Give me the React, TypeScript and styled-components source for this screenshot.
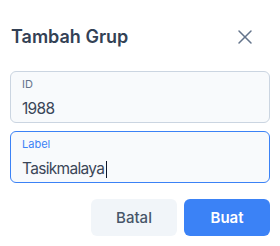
import styled, { createGlobalStyle } from "styled-components";
import { X } from "lucide-react";

const GlobalStyle = createGlobalStyle`
  html, body {
    margin: 0;
    padding: 0;
    background: #ffffff;
  }
  body {
    font-family: Inter, "Noto Sans", sans-serif;
    -webkit-font-smoothing: antialiased;
  }
`;

const Dialog = styled.div`
  width: 280px;
  height: 246px;
  box-sizing: border-box;
  padding: 25px 10px 11px;
  display: flex;
  flex-direction: column;
  background: #ffffff;
`;

const Header = styled.div`
  display: flex;
  align-items: center;
  justify-content: space-between;
  height: 24px;
  margin-bottom: 22px;
`;

const Title = styled.h2`
  margin: 0 0 0 1px;
  font-size: 18px;
  line-height: 24px;
  font-weight: 600;
  color: #334155;
`;

const CloseButton = styled.button`
  display: flex;
  align-items: center;
  justify-content: center;
  width: 24px;
  height: 24px;
  padding: 0;
  margin-right: 13px;
  border: none;
  background: transparent;
  color: #64748b;
  cursor: pointer;
`;

const Fields = styled.div`
  display: flex;
  flex-direction: column;
  gap: 8px;
`;

const Field = styled.label<{ $focused?: boolean }>`
  display: flex;
  flex-direction: column;
  padding: 5px 11px 3px;
  border: 1px solid ${(p) => (p.$focused ? "#3b82f6" : "#cbd5e1")};
  border-radius: 6px;
  background: #f8fafc;
`;

const FieldLabel = styled.span<{ $focused?: boolean }>`
  font-size: 11px;
  line-height: 14px;
  color: ${(p) => (p.$focused ? "#3b82f6" : "#64748b")};
`;

const FieldValue = styled.span`
  display: flex;
  align-items: center;
  margin-top: 8px;
  font-size: 15.5px;
  line-height: 20px;
  letter-spacing: -0.7px;
  color: #3b4658;
`;

const Caret = styled.span`
  display: inline-block;
  width: 1px;
  height: 17px;
  margin-left: 2px;
  background: #0f172a;
`;

const Actions = styled.div`
  display: flex;
  justify-content: flex-end;
  gap: 7px;
  margin-top: 16px;
`;

const Button = styled.button<{ $primary?: boolean }>`
  width: 86px;
  height: 37px;
  border: none;
  border-radius: 6px;
  font-family: Inter, "Noto Sans", sans-serif;
  font-size: 15px;
  font-weight: ${(p) => (p.$primary ? 600 : 500)};
  background: ${(p) => (p.$primary ? "#3b82f6" : "#f1f5f9")};
  color: ${(p) => (p.$primary ? "#ffffff" : "#475569")};
  cursor: pointer;
`;

export default function App() {
  return (
    <>
      <GlobalStyle />
      <Dialog>
        <Header>
          <Title>Tambah Grup</Title>
          <CloseButton aria-label="Tutup">
            <X size={24} strokeWidth={1.5} />
          </CloseButton>
        </Header>
        <Fields>
          <Field>
            <FieldLabel>ID</FieldLabel>
            <FieldValue>1988</FieldValue>
          </Field>
          <Field $focused>
            <FieldLabel $focused>Label</FieldLabel>
            <FieldValue>
              Tasikmalaya
              <Caret />
            </FieldValue>
          </Field>
        </Fields>
        <Actions>
          <Button>Batal</Button>
          <Button $primary>Buat</Button>
        </Actions>
      </Dialog>
    </>
  );
}
